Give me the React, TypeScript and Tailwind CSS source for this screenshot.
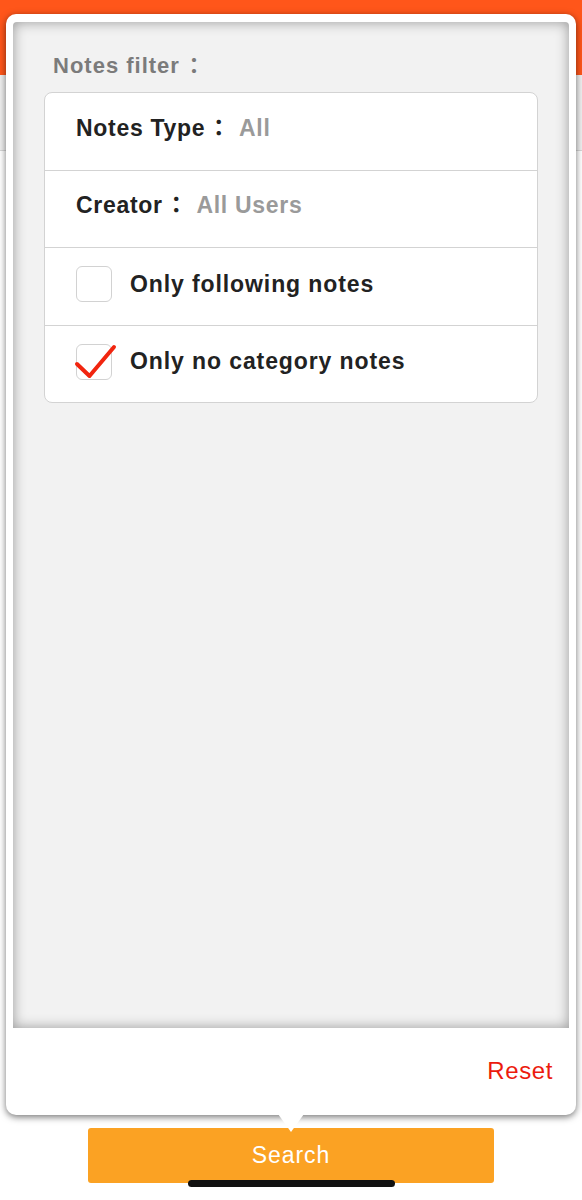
const font = "font-['Liberation_Sans','Noto_Sans_CJK_TC',sans-serif]";

const Checkbox = ({ checked }: { checked?: boolean }) => {
  return (
    <div className="relative h-[36px] w-[36px] shrink-0 rounded-[6px] border border-[#d2d2d2] bg-white">
      {checked && (
        <svg
          className="absolute left-[-2px] top-[-4px] overflow-visible"
          width="40"
          height="40"
          viewBox="0 0 40 40"
          fill="none"
        >
          <path
            d="M2 23 L14.5 35 L39 6"
            stroke="#f1250f"
            strokeWidth="4"
            strokeLinecap="round"
            strokeLinejoin="round"
          />
        </svg>
      )}
    </div>
  );
};

const Field = ({ label, value, first }: { label: string; value: string; first?: boolean }) => {
  return (
    <div
      className={
        first
          ? "flex h-[77px] items-center px-[31px] pb-[7px] text-[23px] font-bold leading-none tracking-[0.7px]"
          : "flex h-[77px] items-center border-t border-[#d3d3d3] px-[31px] pb-[7px] text-[23px] font-bold leading-none tracking-[0.7px]"
      }
    >
      <span className="text-[#222]">{label}</span>
      <span className="ml-[2px] text-[#222]">：</span>
      <span className="ml-[8px] text-[#9a9a9a]">{value}</span>
    </div>
  );
};

const App = () => {
  return (
    <div className={`relative h-[1200px] w-full overflow-hidden bg-white ${font}`}>
      {/* page under the popover */}
      <div className="flex h-full flex-col">
        <div className="h-[75px] bg-[#ff561a]" />
        <div className="h-[76px] border-b border-[#d6d6d6] bg-[#efefef]" />
        <div className="flex-1 bg-white" />
        <div className="flex h-[72px] justify-center pb-[17px]">
          <button className="h-[55px] w-[406px] rounded-[3px] bg-[#fba223] text-[23px] tracking-[0.9px] text-white">
            Search
          </button>
        </div>
      </div>

      {/* home indicator */}
      <div className="absolute bottom-[13px] left-[188px] h-[7px] w-[207px] rounded-full bg-[#111]" />

      {/* popover */}
      <div className="absolute left-[6px] top-[14px] flex h-[1101px] w-[570px] flex-col rounded-[10px] bg-white px-[7px] pt-[8px] shadow-[0_2px_7px_rgba(0,0,0,0.55)]">
        <div className="flex-1 rounded-t-[4px] bg-[#f2f2f2] px-[31px] pt-[33px] shadow-[inset_0_0_13px_rgba(0,0,0,0.38)]">
          <div className="pl-[9px] text-[22px] font-bold leading-none tracking-[1px] text-[#7b7b7b]">
            Notes filter<span className="ml-[3px]">：</span>
          </div>
          <div className="mt-[15px] overflow-hidden rounded-[8px] border border-[#d3d3d3] bg-white">
            <Field first label="Notes Type" value="All" />
            <Field label="Creator" value="All Users" />
            <div className="flex h-[78px] items-center gap-[18px] border-t border-[#d3d3d3] px-[31px] pb-[5px]">
              <Checkbox />
              <span className="text-[23px] font-bold leading-none tracking-[0.9px] text-[#222]">
                Only following notes
              </span>
            </div>
            <div className="flex h-[77px] items-center gap-[18px] border-t border-[#d3d3d3] px-[31px] pb-[5px]">
              <Checkbox checked />
              <span className="text-[23px] font-bold leading-none tracking-[0.9px] text-[#222]">
                Only no category notes
              </span>
            </div>
          </div>
        </div>
        <div className="flex h-[87px] items-center justify-end pr-[16px] pb-[2px]">
          <span className="text-[24px] tracking-[0.6px] text-[#ec1b0e]">Reset</span>
        </div>
        {/* arrow */}
        <div className="absolute bottom-[-17px] left-[272px] h-0 w-0 border-x-[13px] border-t-[18px] border-x-transparent border-t-white" />
      </div>
    </div>
  );
};

export default App;
